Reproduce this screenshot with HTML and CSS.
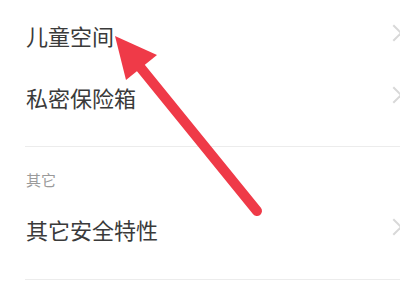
FILE: index.html
```html
<!DOCTYPE html>
<html lang="zh-CN">
<head>
    <meta charset="UTF-8">
    <meta name="viewport" content="width=device-width, initial-scale=1.0">
    <title>安全设置</title>
    <link rel="stylesheet" href="styles.css">
</head>
<body>
    <div class="settings">
        <div class="group first">
            <div class="item">
                <span class="label">儿童空间</span>
                <span class="chevron"></span>
            </div>
            <div class="item">
                <span class="label">私密保险箱</span>
                <span class="chevron"></span>
            </div>
        </div>
        <div class="group">
            <div class="group-title">其它</div>
            <div class="item">
                <span class="label">其它安全特性</span>
                <span class="chevron"></span>
            </div>
        </div>
    </div>

    <!-- 标注箭头 -->
    <svg class="arrow" width="400" height="300" viewBox="0 0 400 300">
        <line x1="136" y1="62" x2="257" y2="211" stroke="#ef3a48" stroke-width="10" stroke-linecap="round"/>
        <polygon points="115,36 157,55 126,80" fill="#ef3a48"/>
    </svg>
</body>
</html>
```

FILE: styles.css
```css
body {
    margin: 0;
    padding: 0;
    background-color: #fff;
    font-family: "Noto Sans CJK SC", "Noto Sans", sans-serif;
    width: 400px;
    height: 300px;
    overflow: hidden;
    position: relative;
}

.settings {
    padding-top: 4px;
}

.group {
    margin-left: 25px;
    border-bottom: 1px solid #ececec;
    padding-bottom: 19px;
}

.group.first {
    padding-bottom: 18px;
}

.group-title {
    font-size: 15px;
    line-height: 20px;
    color: #9a9a9a;
    padding: 23px 0 8px 1px;
}

.item {
    height: 62px;
    display: flex;
    align-items: center;
    justify-content: space-between;
}

.label {
    font-size: 22px;
    color: #3a3a3a;
    padding-left: 1px;
}

.chevron {
    width: 10px;
    height: 10px;
    border-top: 2px solid #d8d8d8;
    border-right: 2px solid #d8d8d8;
    transform: rotate(45deg);
    margin-right: 0;
    margin-top: -4px;
}

.arrow {
    position: absolute;
    top: 0;
    left: 0;
}
```
